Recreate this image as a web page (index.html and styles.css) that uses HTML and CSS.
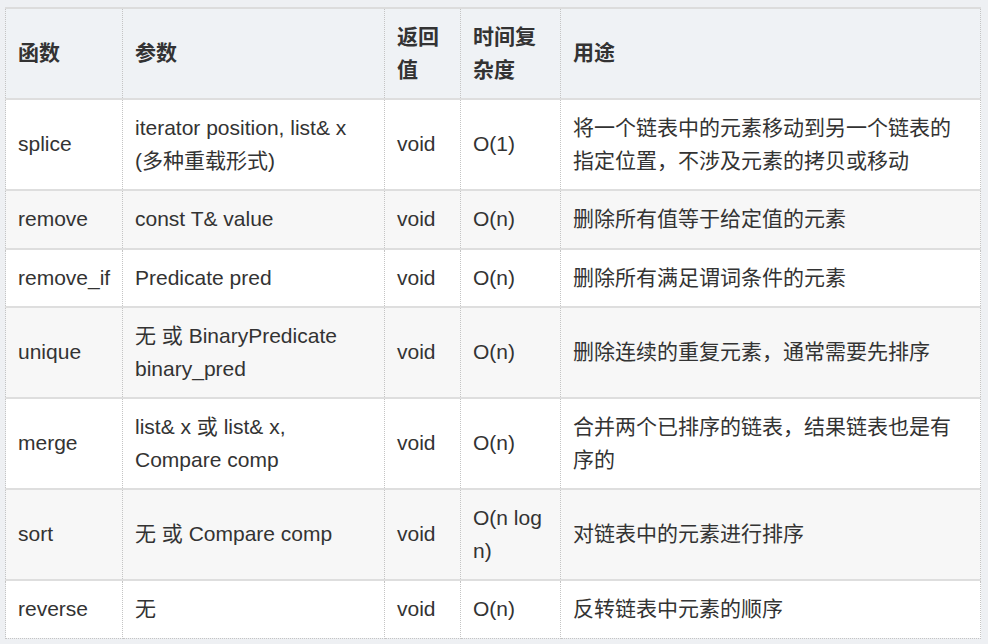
FILE: index.html
```html
<!DOCTYPE html>
<html lang="zh-CN">
<head>
<meta charset="utf-8">
<title>list 操作</title>
<link rel="stylesheet" href="styles.css">
</head>
<body>
<table class="ops">
  <colgroup>
    <col class="c-fn">
    <col class="c-arg">
    <col class="c-ret">
    <col class="c-cx">
    <col class="c-use">
  </colgroup>
  <thead>
    <tr>
      <th>函数</th>
      <th>参数</th>
      <th>返回值</th>
      <th>时间复杂度</th>
      <th>用途</th>
    </tr>
  </thead>
  <tbody>
    <tr>
      <td class="fn">splice</td>
      <td>iterator position, list&amp; x (多种重载形式)</td>
      <td>void</td>
      <td>O(1)</td>
      <td>将一个链表中的元素移动到另一个链表的指定位置，不涉及元素的拷贝或移动</td>
    </tr>
    <tr>
      <td class="fn">remove</td>
      <td>const T&amp; value</td>
      <td>void</td>
      <td>O(n)</td>
      <td>删除所有值等于给定值的元素</td>
    </tr>
    <tr>
      <td class="fn">remove_if</td>
      <td>Predicate pred</td>
      <td>void</td>
      <td>O(n)</td>
      <td>删除所有满足谓词条件的元素</td>
    </tr>
    <tr>
      <td class="fn">unique</td>
      <td>无 或 BinaryPredicate binary_pred</td>
      <td>void</td>
      <td>O(n)</td>
      <td>删除连续的重复元素，通常需要先排序</td>
    </tr>
    <tr>
      <td class="fn">merge</td>
      <td>list&amp; x 或 list&amp; x, Compare comp</td>
      <td>void</td>
      <td>O(n)</td>
      <td>合并两个已排序的链表，结果链表也是有序的</td>
    </tr>
    <tr>
      <td class="fn">sort</td>
      <td>无 或 Compare comp</td>
      <td>void</td>
      <td>O(n log n)</td>
      <td>对链表中的元素进行排序</td>
    </tr>
    <tr>
      <td class="fn">reverse</td>
      <td>无</td>
      <td>void</td>
      <td>O(n)</td>
      <td>反转链表中元素的顺序</td>
    </tr>
  </tbody>
</table>
</body>
</html>
```

FILE: styles.css
```css
html, body {
  background: #eef0f3;
}
body {
  margin: 7px 0 0 5px;
  font-family: "Liberation Sans", Arial, "Noto Sans CJK SC", sans-serif;
  font-size: 21px;
  color: #333;
}
.ops {
  width: 975px;
  table-layout: fixed;
  border-collapse: collapse;
  border-top: 2px solid #dcdcdc;
  border-left: 1px dotted #c4c4c4;
  border-right: 1px dotted #c4c4c4;
  border-bottom: 1px dotted #c4c4c4;
}
.c-fn { width: 117px; }
.c-arg { width: 262px; }
.c-ret { width: 76px; }
.c-cx { width: 100px; }
.c-use { width: 420px; }
.ops th, .ops td {
  text-align: left;
  vertical-align: middle;
  padding: 12px 12px 12px 12px;
  line-height: 32.5px;
  border-left: 1px dotted #c4c4c4;
  border-right: 1px dotted #c4c4c4;
  border-bottom: 2px solid #dedede;
}
.ops td.fn {
  white-space: nowrap;
}
.ops th {
  font-weight: bold;
  background: #eff2f5;
}
.ops td {
  background: #ffffff;
}
.ops tbody tr:nth-child(even) td {
  background: #f7f7f7;
}
.ops tbody tr:last-child td {
  border-bottom: 1px dotted #c4c4c4;
}
```
